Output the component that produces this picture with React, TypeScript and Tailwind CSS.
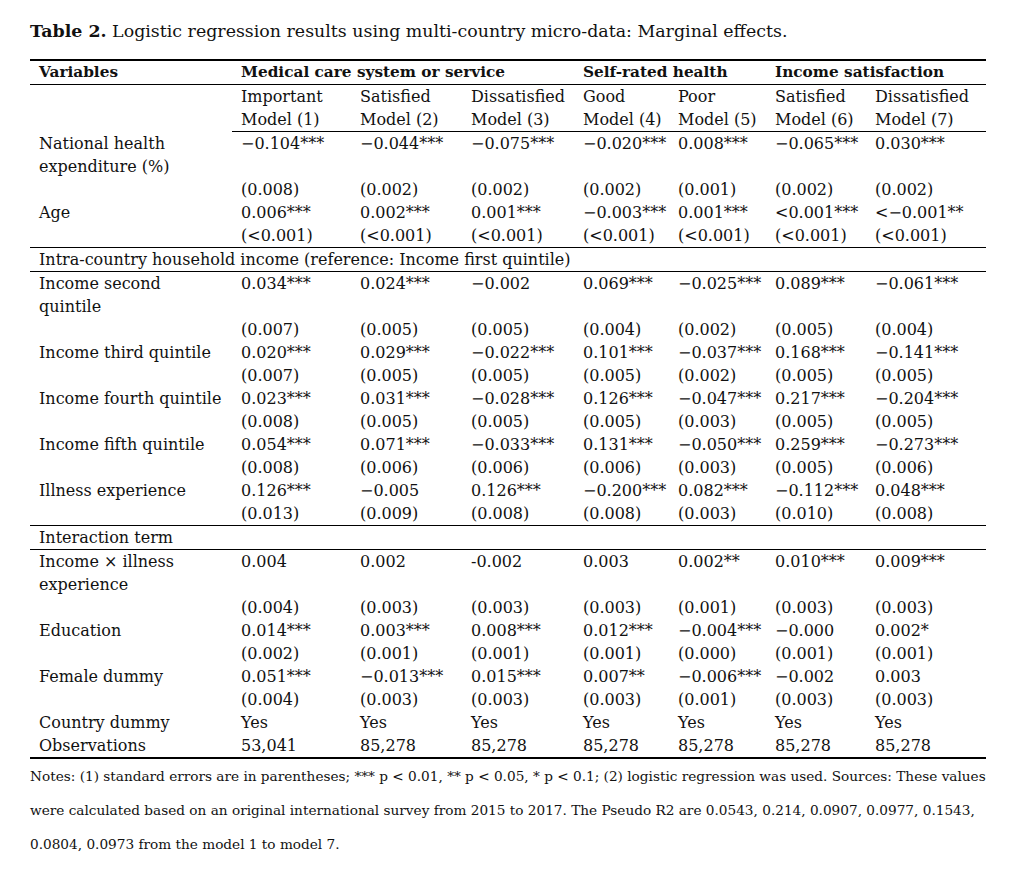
import React from "react";

const COLS =
  "grid grid-cols-[202px_119px_111px_112px_95px_97px_100px_120px] h-[23px] leading-[23px]";

type Line = string[];

const Row = ({ cells }: { cells: Line }) => (
  <div className={COLS}>
    {cells.map((c, i) => (
      <div key={i} className="pl-[9px] whitespace-nowrap">
        {c}
      </div>
    ))}
  </div>
);

const SpanRow = ({ text }: { text: string }) => (
  <div className="h-[23px] leading-[23px] pl-[9px] whitespace-nowrap">{text}</div>
);

const Rule = () => <div className="h-px bg-black" />;
const Thick = () => <div className="h-[2px] bg-black" />;

const block1: Line[] = [
  ["National health", "−0.104***", "−0.044***", "−0.075***", "−0.020***", "0.008***", "−0.065***", "0.030***"],
  ["expenditure (%)", "", "", "", "", "", "", ""],
  ["", "(0.008)", "(0.002)", "(0.002)", "(0.002)", "(0.001)", "(0.002)", "(0.002)"],
  ["Age", "0.006***", "0.002***", "0.001***", "−0.003***", "0.001***", "<0.001***", "<−0.001**"],
  ["", "(<0.001)", "(<0.001)", "(<0.001)", "(<0.001)", "(<0.001)", "(<0.001)", "(<0.001)"],
];

const block2: Line[] = [
  ["Income second", "0.034***", "0.024***", "−0.002", "0.069***", "−0.025***", "0.089***", "−0.061***"],
  ["quintile", "", "", "", "", "", "", ""],
  ["", "(0.007)", "(0.005)", "(0.005)", "(0.004)", "(0.002)", "(0.005)", "(0.004)"],
  ["Income third quintile", "0.020***", "0.029***", "−0.022***", "0.101***", "−0.037***", "0.168***", "−0.141***"],
  ["", "(0.007)", "(0.005)", "(0.005)", "(0.005)", "(0.002)", "(0.005)", "(0.005)"],
  ["Income fourth quintile", "0.023***", "0.031***", "−0.028***", "0.126***", "−0.047***", "0.217***", "−0.204***"],
  ["", "(0.008)", "(0.005)", "(0.005)", "(0.005)", "(0.003)", "(0.005)", "(0.005)"],
  ["Income fifth quintile", "0.054***", "0.071***", "−0.033***", "0.131***", "−0.050***", "0.259***", "−0.273***"],
  ["", "(0.008)", "(0.006)", "(0.006)", "(0.006)", "(0.003)", "(0.005)", "(0.006)"],
  ["Illness experience", "0.126***", "−0.005", "0.126***", "−0.200***", "0.082***", "−0.112***", "0.048***"],
  ["", "(0.013)", "(0.009)", "(0.008)", "(0.008)", "(0.003)", "(0.010)", "(0.008)"],
];

const block3: Line[] = [
  ["Income × illness", "0.004", "0.002", "-0.002", "0.003", "0.002**", "0.010***", "0.009***"],
  ["experience", "", "", "", "", "", "", ""],
  ["", "(0.004)", "(0.003)", "(0.003)", "(0.003)", "(0.001)", "(0.003)", "(0.003)"],
  ["Education", "0.014***", "0.003***", "0.008***", "0.012***", "−0.004***", "−0.000", "0.002*"],
  ["", "(0.002)", "(0.001)", "(0.001)", "(0.001)", "(0.000)", "(0.001)", "(0.001)"],
  ["Female dummy", "0.051***", "−0.013***", "0.015***", "0.007**", "−0.006***", "−0.002", "0.003"],
  ["", "(0.004)", "(0.003)", "(0.003)", "(0.003)", "(0.001)", "(0.003)", "(0.003)"],
  ["Country dummy", "Yes", "Yes", "Yes", "Yes", "Yes", "Yes", "Yes"],
  ["Observations", "53,041", "85,278", "85,278", "85,278", "85,278", "85,278", "85,278"],
];

export default function App() {
  return (
    <div className="min-h-[891px] w-[1021px] bg-white text-[#111] font-['DejaVu_Serif','Liberation_Serif',serif]">
      <div className="ml-[30px] w-[956px] pt-[18px]">
        <div className="h-[26px] leading-[26px] text-[17.4px] mb-[15px] whitespace-nowrap">
          <span className="font-bold">Table 2.</span> Logistic regression results using multi-country micro-data: Marginal effects.
        </div>
        <div className="text-[16px]">
          <Thick />
          <div className={COLS + " font-bold text-[15.3px]"}>
            <div className="pl-[9px] whitespace-nowrap">Variables</div>
            <div className="col-span-3 pl-[9px] whitespace-nowrap">Medical care system or service</div>
            <div className="col-span-2 pl-[9px] whitespace-nowrap">Self-rated health</div>
            <div className="col-span-2 pl-[9px] whitespace-nowrap">Income satisfaction</div>
          </div>
          <Rule />
          <Row cells={["", "Important", "Satisfied", "Dissatisfied", "Good", "Poor", "Satisfied", "Dissatisfied"]} />
          <Row cells={["", "Model (1)", "Model (2)", "Model (3)", "Model (4)", "Model (5)", "Model (6)", "Model (7)"]} />
          <div className="ml-[202px] h-px bg-black" />
          {block1.map((r, i) => (
            <Row key={i} cells={r} />
          ))}
          <Rule />
          <SpanRow text="Intra-country household income (reference: Income first quintile)" />
          <Rule />
          {block2.map((r, i) => (
            <Row key={i} cells={r} />
          ))}
          <Rule />
          <SpanRow text="Interaction term" />
          <Rule />
          {block3.map((r, i) => (
            <Row key={i} cells={r} />
          ))}
          <Thick />
        </div>
        <div className="text-[13.65px] leading-[34px] whitespace-nowrap">
          <div>
            Notes: (1) standard errors are in parentheses; *** p &lt; 0.01, ** p &lt; 0.05, * p &lt; 0.1; (2) logistic regression was used. Sources: These values
          </div>
          <div>
            were calculated based on an original international survey from 2015 to 2017. The Pseudo R2 are 0.0543, 0.214, 0.0907, 0.0977, 0.1543,
          </div>
          <div>0.0804, 0.0973 from the model 1 to model 7.</div>
        </div>
      </div>
    </div>
  );
}
